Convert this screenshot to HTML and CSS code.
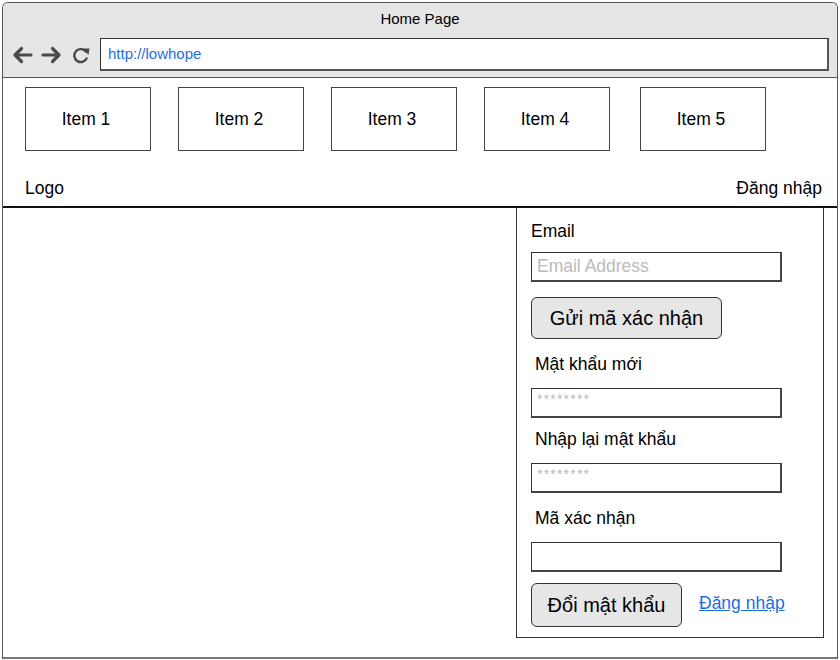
FILE: index.html
```html
<!DOCTYPE html>
<html>
<head>
<meta charset="utf-8">
<link rel="stylesheet" href="styles.css">
</head>
<body>
<div class="frame">
  <div class="chrome">
    <div class="title">Home Page</div>
    <div class="toolbar">
      <div class="icons">
        <svg class="ico" width="22" height="20" viewBox="0 0 22 20"><path d="M20 10 H4 M10.5 3.5 L4 10 L10.5 16.5" fill="none" stroke="#4a4a4a" stroke-width="3.2" stroke-linecap="round" stroke-linejoin="round"/></svg>
        <svg class="ico" width="22" height="20" viewBox="0 0 22 20"><path d="M2 10 H18 M11.5 3.5 L18 10 L11.5 16.5" fill="none" stroke="#4a4a4a" stroke-width="3.2" stroke-linecap="round" stroke-linejoin="round"/></svg>
        <svg class="ico" width="20" height="20" viewBox="0 0 20 20"><path d="M15.5 7.5 A6.5 6.5 0 1 0 16 12.5" fill="none" stroke="#4a4a4a" stroke-width="2.4"/><path d="M12 3.5 L18.5 3.5 L17.5 10 Z" fill="#4a4a4a"/></svg>
      </div>
      <div class="url">http://lowhope</div>
    </div>
  </div>
  <div class="nav">
    <div class="items">
      <div class="item">Item 1</div>
      <div class="item">Item 2</div>
      <div class="item">Item 3</div>
      <div class="item">Item 4</div>
      <div class="item item-last">Item 5</div>
    </div>
    <div class="logo-row">
      <span>Logo</span>
      <span>Đăng nhập</span>
    </div>
  </div>
  <div class="main">
    <div class="panel">
      <div class="label first">Email</div>
      <div class="field"><span class="ph">Email Address</span></div>
      <div class="btn btn-send">Gửi mã xác nhận</div>
      <div class="label sub">Mật khẩu mới</div>
      <div class="field"><span class="stars">********</span></div>
      <div class="label sub tight">Nhập lại mật khẩu</div>
      <div class="field"><span class="stars">********</span></div>
      <div class="label sub">Mã xác nhận</div>
      <div class="field"></div>
      <div class="actions">
        <div class="btn btn-change">Đổi mật khẩu</div>
        <a class="link" href="#">Đăng nhập</a>
      </div>
    </div>
  </div>
</div>
</body>
</html>
```

FILE: styles.css
```css
* { box-sizing: border-box; }
html, body { margin: 0; padding: 0; background: #fff; }
body { font-family: "Liberation Sans", Arial, sans-serif; color: #000; }

.frame {
  margin: 2px 0 0 2px;
  width: 836px;
  height: 657px;
  border: 1px solid #555;
  border-bottom: 2px solid #777;
  border-radius: 6px 6px 0 0;
  display: flex;
  flex-direction: column;
  overflow: hidden;
}

.chrome {
  background: #e6e6e6;
  height: 75px;
  border-bottom: 1px solid #555;
  flex: none;
}
.title {
  height: 31px;
  line-height: 31px;
  text-align: center;
  font-size: 15px;
}
.toolbar {
  margin-top: 4px;
  display: flex;
  align-items: center;
  padding-left: 8px;
  padding-right: 8px;
}
.icons {
  display: flex;
  align-items: center;
  gap: 8px;
  width: 89px;
}
.ico { display: block; }
.url {
  flex: 1;
  height: 33px;
  background: #fff;
  border-style: solid;
  border-width: 1px 2px 2px 1px;
  border-color: #333 #555 #555 #333;
  line-height: 30px;
  padding-left: 7px;
  font-size: 15px;
  color: #1f6fde;
}

.nav {
  flex: none;
  height: 130px;
  border-bottom: 2px solid #111;
  padding: 9px 15px 0 22px;
}
.items {
  display: flex;
  gap: 27px;
}
.item {
  width: 126px;
  height: 64px;
  border: 1px solid #444;
  display: flex;
  align-items: center;
  justify-content: center;
  padding-right: 4px;
  font-size: 17.5px;
}
.item-last { margin-left: 3px; }
.logo-row {
  margin-top: 26px;
  display: flex;
  justify-content: space-between;
  font-size: 17.5px;
  line-height: 22px;
}

.main {
  flex: 1;
  display: flex;
  justify-content: flex-end;
  align-items: flex-start;
  padding-right: 13px;
}
.panel {
  width: 308px;
  border: 1px solid #333;
  border-top: none;
  padding: 13px 14px 10px 14px;
}
.label {
  font-size: 17.5px;
  line-height: 20px;
}
.label.sub {
  padding-left: 4px;
  margin-top: 15px;
}
.label.tight { margin-top: 11px; }
.field {
  margin-top: 11px;
  width: 251px;
  height: 30px;
  border-style: solid;
  border-width: 1px 2px 2px 1px;
  border-color: #333 #444 #444 #333;
}
.label.sub + .field { margin-top: 14px; }
.ph {
  display: block;
  font-size: 17.5px;
  line-height: 27px;
  padding-left: 5px;
  color: #bbb;
}
.stars {
  display: block;
  font-size: 14px;
  line-height: 14px;
  padding: 3px 0 0 5px;
  color: #bbb;
  letter-spacing: 1.2px;
}
.btn {
  background: #e6e6e6;
  border: 1px solid #333;
  border-radius: 6px;
  display: flex;
  align-items: center;
  justify-content: center;
  font-size: 20px;
}
.btn-send {
  margin-top: 15px;
  width: 191px;
  height: 42px;
}
.actions {
  margin-top: 11px;
  display: flex;
  align-items: center;
  gap: 17px;
}
.btn-change {
  width: 151px;
  height: 44px;
}
.link {
  font-size: 17.5px;
  color: #1a6fe0;
  text-decoration: underline;
  margin-bottom: 4px;
}
```
